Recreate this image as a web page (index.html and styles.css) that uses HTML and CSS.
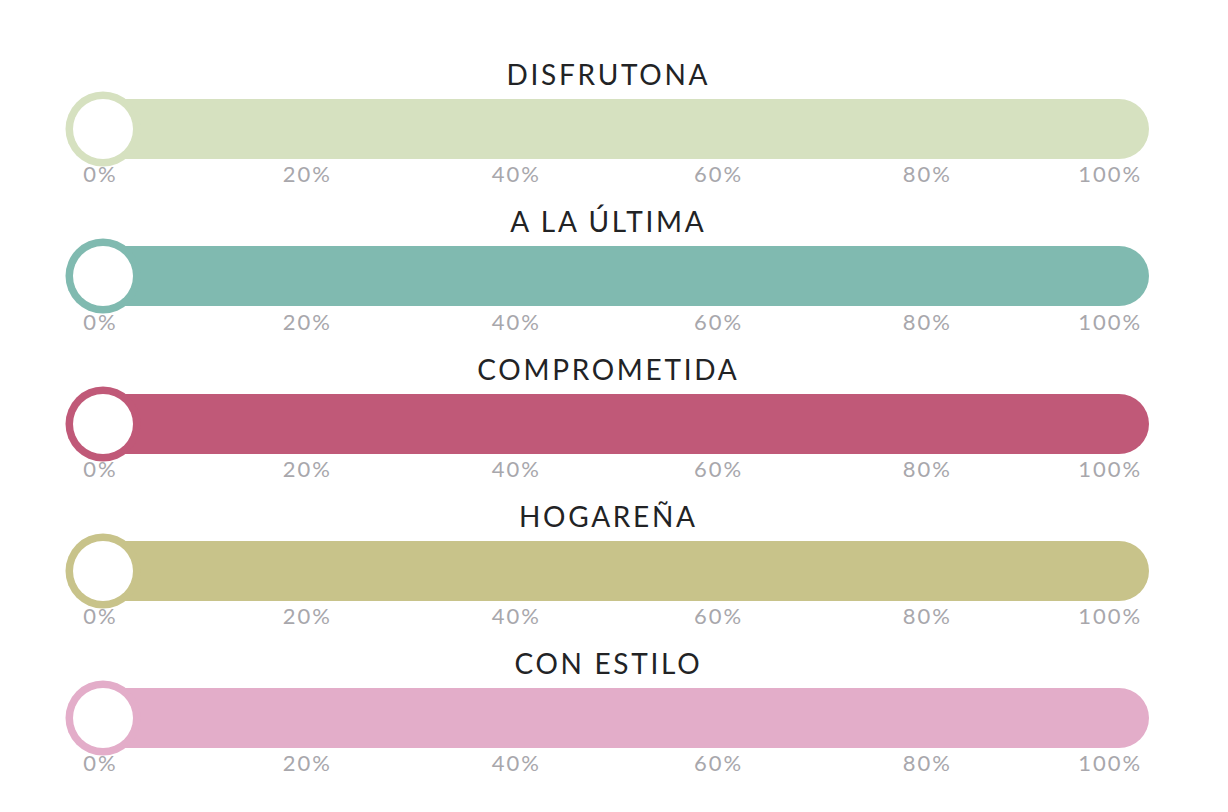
FILE: index.html
```html
<!DOCTYPE html>
<html lang="es">
<head>
<meta charset="utf-8">
<title>Sliders</title>
<link rel="stylesheet" href="styles.css">
</head>
<body>
<main class="sliders">
  <section class="slider green">
    <h2 class="title">DISFRUTONA</h2>
    <div class="track"><span class="thumb"></span></div>
    <div class="ticks"><span>0%</span><span>20%</span><span>40%</span><span>60%</span><span>80%</span><span>100%</span></div>
  </section>
  <section class="slider teal">
    <h2 class="title">A LA ÚLTIMA</h2>
    <div class="track"><span class="thumb"></span></div>
    <div class="ticks"><span>0%</span><span>20%</span><span>40%</span><span>60%</span><span>80%</span><span>100%</span></div>
  </section>
  <section class="slider rose">
    <h2 class="title">COMPROMETIDA</h2>
    <div class="track"><span class="thumb"></span></div>
    <div class="ticks"><span>0%</span><span>20%</span><span>40%</span><span>60%</span><span>80%</span><span>100%</span></div>
  </section>
  <section class="slider olive">
    <h2 class="title">HOGAREÑA</h2>
    <div class="track"><span class="thumb"></span></div>
    <div class="ticks"><span>0%</span><span>20%</span><span>40%</span><span>60%</span><span>80%</span><span>100%</span></div>
  </section>
  <section class="slider pink">
    <h2 class="title">CON ESTILO</h2>
    <div class="track"><span class="thumb"></span></div>
    <div class="ticks"><span>0%</span><span>20%</span><span>40%</span><span>60%</span><span>80%</span><span>100%</span></div>
  </section>
</main>
</body>
</html>
```

FILE: styles.css
```css
html, body {
  margin: 0;
  padding: 0;
  background: #ffffff;
}

body {
  font-family: Lato, "Noto Sans", sans-serif;
}

.sliders {
  width: 1084px;
  margin-left: 65px;
  padding-top: 51px;
}

.slider {
  height: 147.25px;
  display: flex;
  flex-direction: column;
}

.green { --c: #d6e1c0; }
.teal  { --c: #80bab0; }
.rose  { --c: #c05978; }
.olive { --c: #c8c38a; }
.pink  { --c: #e3adc9; }

.title {
  margin: 0;
  box-sizing: border-box;
  height: 48px;
  padding-top: 3px;
  padding-left: 2.7px;
  font-size: 28px;
  line-height: 40px;
  font-weight: 400;
  letter-spacing: 2.7px;
  text-align: center;
  color: #222325;
}

.track {
  position: relative;
  flex: none;
  width: 1076px;
  height: 60px;
  margin-left: 8px;
  border-radius: 30px;
  background: var(--c);
}

.thumb {
  position: absolute;
  left: 0;
  top: 0;
  width: 60px;
  height: 60px;
  border-radius: 50%;
  background: #ffffff;
  box-shadow: 0 0 0 7.5px var(--c);
}

.ticks {
  display: grid;
  grid-template-columns: 199.4px 209px 202.3px 208.7px 175.6px auto;
  padding-left: 18.3px;
  padding-top: 2.3px;
  font-size: 22px;
  line-height: 26.4px;
  letter-spacing: 2px;
  color: #a8a7ac;
}
```
